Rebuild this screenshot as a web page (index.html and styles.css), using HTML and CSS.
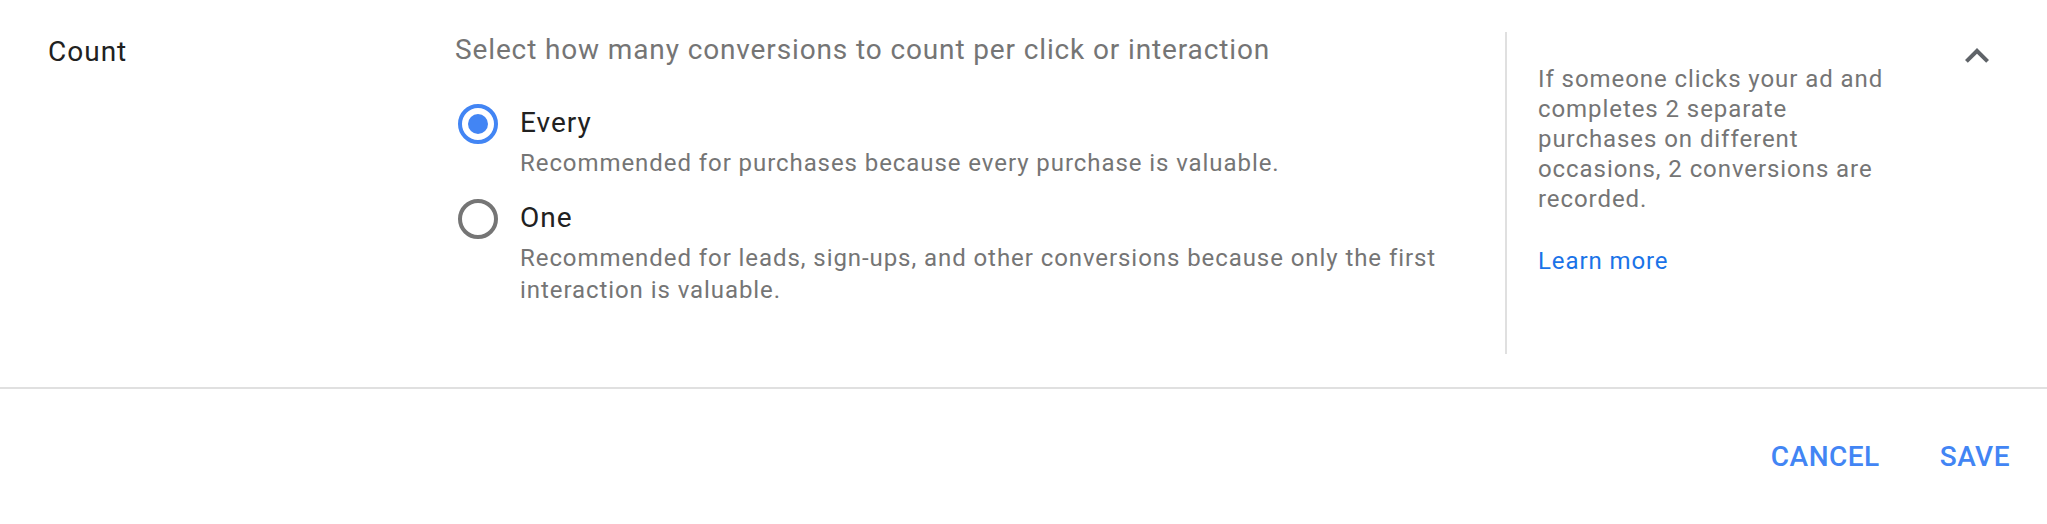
FILE: index.html
```html
<!DOCTYPE html>
<html lang="en">
<head>
<meta charset="utf-8">
<title>Count</title>
<link rel="stylesheet" href="styles.css">
</head>
<body>
<div class="panel">
  <section class="setting">
    <div class="label-col">Count</div>
    <div class="options-col">
      <div class="question">Select how many conversions to count per click or interaction</div>
      <div class="option first">
        <span class="radio checked"><span class="dot"></span></span>
        <div class="option-text">
          <div class="option-label">Every</div>
          <div class="option-desc">Recommended for purchases because every purchase is valuable.</div>
        </div>
      </div>
      <div class="option">
        <span class="radio"></span>
        <div class="option-text">
          <div class="option-label">One</div>
          <div class="option-desc">Recommended for leads, sign-ups, and other conversions because only the first interaction is valuable.</div>
        </div>
      </div>
    </div>
    <aside class="help">
      <p class="help-text">If someone clicks your ad and completes 2 separate purchases on different occasions, 2 conversions are recorded.</p>
      <a class="learn" href="#">Learn more</a>
    </aside>
    <div class="collapse">
      <svg width="48" height="48" viewBox="0 0 24 24"><path d="M12 8l-6 6 1.41 1.41L12 10.83l4.59 4.58L18 14z" fill="#5f6368"/></svg>
    </div>
  </section>
  <footer class="actions">
    <button class="btn">CANCEL</button>
    <button class="btn">SAVE</button>
  </footer>
</div>
</body>
</html>
```
FILE: styles.css
```css
* { box-sizing: border-box; }
html, body { margin: 0; padding: 0; background: #fff; }
body {
  font-family: Roboto, "Liberation Sans", Arial, sans-serif;
  color: #212121;
  width: 2047px;
  height: 524px;
  overflow: hidden;
}
.setting {
  display: flex;
  align-items: stretch;
  padding: 32px 46px 33px 48px;
  border-bottom: 2px solid #e0e0e0;
}
.label-col {
  width: 407px;
  flex: none;
  font-size: 28px;
  line-height: 40px;
  letter-spacing: 1px;
  color: #212121;
}
.options-col {
  flex: 1;
  padding-right: 48px;
}
.question {
  font-size: 28px;
  line-height: 36px;
  letter-spacing: 0.87px;
  color: #757575;
}
.option {
  display: flex;
  align-items: flex-start;
  margin-top: 19px;
}
.option.first { margin-top: 35px; }
.radio {
  flex: none;
  width: 40px;
  height: 40px;
  margin: 1px 22px 0 3px;
  border: 4px solid #757575;
  border-radius: 50%;
  display: flex;
  align-items: center;
  justify-content: center;
}
.radio.checked { border-color: #4285f4; }
.dot {
  width: 20px;
  height: 20px;
  border-radius: 50%;
  background: #4285f4;
}
.option-label {
  font-size: 28px;
  line-height: 40px;
  letter-spacing: 1px;
  color: #212121;
}
.option-desc {
  margin-top: 4px;
  font-size: 24px;
  line-height: 32px;
  letter-spacing: 0.93px;
  color: #757575;
}
.help {
  flex: none;
  width: 448px;
  min-height: 322px;
  border-left: 2px solid #e0e0e0;
  padding: 32px 0 0 31px;
}
.help-text {
  margin: 0;
  width: 356px;
  font-size: 24px;
  line-height: 30px;
  letter-spacing: 0.93px;
  color: #757575;
}
.learn {
  display: inline-block;
  margin-top: 32px;
  font-size: 24px;
  line-height: 30px;
  letter-spacing: 0.9px;
  color: #1a73e8;
  text-decoration: none;
}
.collapse {
  flex: none;
  width: 48px;
  height: 48px;
}
.collapse svg { display: block; }
.actions {
  display: flex;
  justify-content: flex-end;
  padding: 32px 7px 0 0;
}
.btn {
  border: none;
  background: none;
  padding: 0 30px;
  height: 72px;
  font-family: Roboto, "Liberation Sans", Arial, sans-serif;
  font-weight: 500;
  font-size: 28px;
  line-height: 72px;
  letter-spacing: 0.5px;
  color: #4285f4;
}
```
